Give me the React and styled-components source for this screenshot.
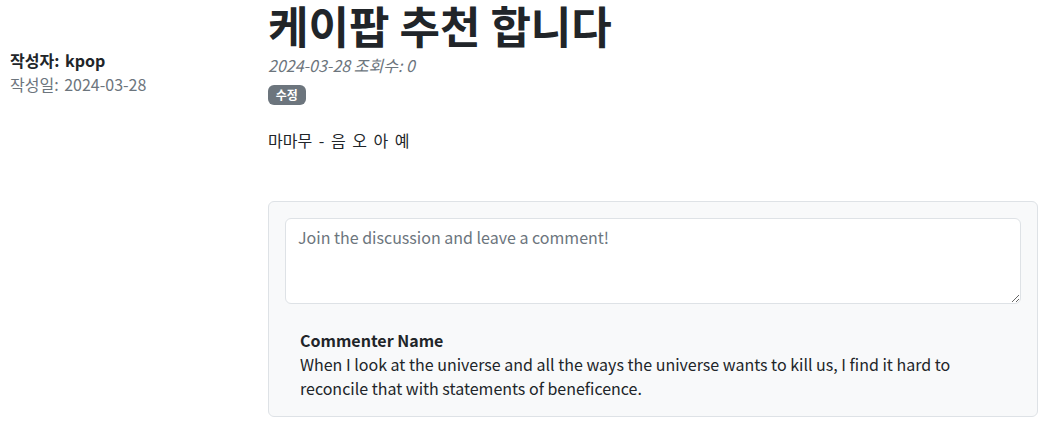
import React from 'react';
import styled, { createGlobalStyle } from 'styled-components';

const GlobalStyle = createGlobalStyle`
  * { box-sizing: border-box; }
  body {
    margin: 0;
    background: #fff;
    color: #212529;
    font-family: "Noto Sans CJK KR", "Noto Sans", sans-serif;
    font-size: 16px;
    line-height: 1.5;
  }
`;

const Page = styled.div`
  display: grid;
  grid-template-columns: 256px 1fr;
  padding: 0 10px 0 10px;
`;

const Aside = styled.aside`
  padding-top: 48px;
  word-spacing: 2px;
`;

const AuthorLine = styled.div`
  font-weight: 700;
`;

const DateLine = styled.div`
  color: #6c757d;
`;

const Main = styled.main`
  padding-left: 2px;
`;

const Title = styled.h1`
  margin: 0 0 3px;
  font-size: 44px;
  line-height: 50px;
  font-weight: 700;
`;

const Meta = styled.div`
  font-style: italic;
  color: #6c757d;
  margin-bottom: 8px;
`;

const Badge = styled.span`
  display: flex;
  width: fit-content;
  padding: 4px 7.8px;
  font-size: 12px;
  font-weight: 700;
  line-height: 12px;
  color: #fff;
  background: #6c757d;
  border-radius: 6px;
`;

const Body = styled.section`
  margin: 23px 0 49px;
  word-spacing: 3px;
`;

const Card = styled.div`
  background: #f8f9fa;
  border: 1px solid #dee2e6;
  border-radius: 6px;
  padding: 16px;
`;

const CommentBox = styled.textarea`
  display: block;
  width: 100%;
  height: 86px;
  padding: 6px 12px;
  margin-bottom: 24px;
  font: inherit;
  color: #212529;
  background: #fff;
  border: 1px solid #dee2e6;
  border-radius: 6px;
  resize: vertical;
  &::placeholder { color: #6c757d; }
`;

const Comment = styled.div`
  margin-left: 15px;
`;

const CommentName = styled.div`
  font-weight: 700;
`;

export default function App() {
  return (
    <>
      <GlobalStyle />
      <Page>
        <Aside>
          <AuthorLine>작성자: kpop</AuthorLine>
          <DateLine>작성일: 2024-03-28</DateLine>
        </Aside>
        <Main>
          <header>
            <Title>케이팝 추천 합니다</Title>
            <Meta>2024-03-28 조회수: 0</Meta>
            <Badge>수정</Badge>
          </header>
          <Body>마마무 - 음 오 아 예</Body>
          <Card>
            <CommentBox rows={3} placeholder="Join the discussion and leave a comment!" />
            <Comment>
              <CommentName>Commenter Name</CommentName>
              When I look at the universe and all the ways the universe wants to kill us, I find it hard to reconcile that with statements of beneficence.
            </Comment>
          </Card>
        </Main>
      </Page>
    </>
  );
}
